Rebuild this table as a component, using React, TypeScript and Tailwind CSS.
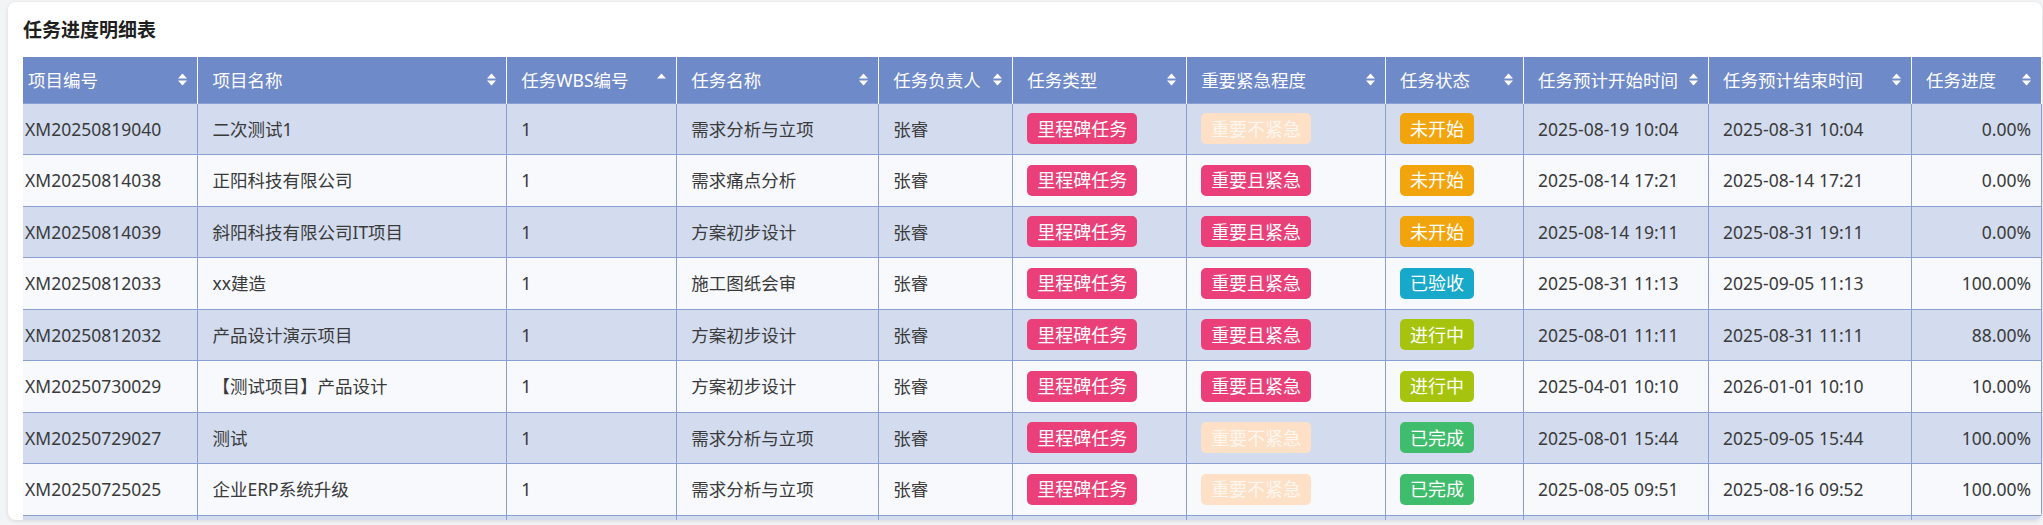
const columns = [
  { title: "项目编号", width: 175, sort: "both" },
  { title: "项目名称", width: 309, sort: "both" },
  { title: "任务WBS编号", width: 170, sort: "up" },
  { title: "任务名称", width: 202, sort: "both" },
  { title: "任务负责人", width: 134, sort: "both" },
  { title: "任务类型", width: 174, sort: "both" },
  { title: "重要紧急程度", width: 199, sort: "both" },
  { title: "任务状态", width: 138, sort: "both" },
  { title: "任务预计开始时间", width: 185, sort: "both" },
  { title: "任务预计结束时间", width: 203, sort: "both" },
  { title: "任务进度", width: 130, sort: "both" },
];

const priorityStyle: Record<string, string> = {
  重要不紧急: "bg-[#fde0c6] text-[#fff7ef]",
  重要且紧急: "bg-[#ea3f78] text-white",
};

const statusStyle: Record<string, string> = {
  未开始: "bg-[#f2a40c]",
  已验收: "bg-[#18a8c9]",
  进行中: "bg-[#a6c40e]",
  已完成: "bg-[#3fbd6c]",
};

const rows = [
  ["XM20250819040", "二次测试1", "需求分析与立项", "重要不紧急", "未开始", "2025-08-19 10:04", "2025-08-31 10:04", "0.00%"],
  ["XM20250814038", "正阳科技有限公司", "需求痛点分析", "重要且紧急", "未开始", "2025-08-14 17:21", "2025-08-14 17:21", "0.00%"],
  ["XM20250814039", "斜阳科技有限公司IT项目", "方案初步设计", "重要且紧急", "未开始", "2025-08-14 19:11", "2025-08-31 19:11", "0.00%"],
  ["XM20250812033", "xx建造", "施工图纸会审", "重要且紧急", "已验收", "2025-08-31 11:13", "2025-09-05 11:13", "100.00%"],
  ["XM20250812032", "产品设计演示项目", "方案初步设计", "重要且紧急", "进行中", "2025-08-01 11:11", "2025-08-31 11:11", "88.00%"],
  ["XM20250730029", "【测试项目】产品设计", "方案初步设计", "重要且紧急", "进行中", "2025-04-01 10:10", "2026-01-01 10:10", "10.00%"],
  ["XM20250729027", "测试", "需求分析与立项", "重要不紧急", "已完成", "2025-08-01 15:44", "2025-09-05 15:44", "100.00%"],
  ["XM20250725025", "企业ERP系统升级", "需求分析与立项", "重要不紧急", "已完成", "2025-08-05 09:51", "2025-08-16 09:52", "100.00%"],
];

function SortIcon({ mode }: { mode: string }) {
  return (
    <svg width="9" height="13" viewBox="0 0 9 13" className="shrink-0">
      <polygon points="0,5.5 4.5,0.5 9,5.5" fill="white" />
      {mode === "both" && <polygon points="0,7.5 9,7.5 4.5,12.5" fill="white" />}
    </svg>
  );
}

function Badge({ text, className }: { text: string; className: string }) {
  return (
    <span className={`inline-flex h-[31px] items-center rounded-[5px] px-[10px] text-[18px] leading-none ${className}`}>
      {text}
    </span>
  );
}

export default function App() {
  return (
    <div
      className="w-[2043px] h-[525px] overflow-hidden bg-[#f3f4f6] pl-[8px] pt-[2px]"
      style={{ fontFamily: '"Noto Sans", "Noto Sans CJK SC", sans-serif' }}
    >
      <div className="w-[2034px] h-[518px] overflow-hidden rounded-[8px] bg-white pl-[15px] pt-[16px] shadow-[0_1px_4px_rgba(0,0,0,0.12)]">
        <h2 className="mb-[15px] h-[24px] text-[19px] font-bold leading-[24px] text-[#1f1f1f]">任务进度明细表</h2>
        <table className="table-fixed border-collapse text-[17.5px] text-[#3a3a3a]">
          <colgroup>
            {columns.map((c) => (
              <col key={c.title} style={{ width: c.width }} />
            ))}
          </colgroup>
          <thead>
            <tr className="h-[46px] bg-[#6f8ac9] text-white">
              {columns.map((c, i) => (
                <th
                  key={c.title}
                  className={`border-x border-white p-0 text-left font-normal first:border-l-0 ${i === 0 ? "pl-[5px]" : "pl-[14px]"} pr-[10px]`}
                >
                  <div className="flex items-center justify-between gap-1 whitespace-nowrap">
                    <span>{c.title}</span>
                    <SortIcon mode={c.sort} />
                  </div>
                </th>
              ))}
            </tr>
          </thead>
          <tbody>
            {rows.map((r, idx) => (
              <tr key={r[0]} className={`h-[51.5px] ${idx % 2 === 0 ? "bg-[#d3dcef]" : "bg-[#f7f9fd]"}`}>
                <td className="border border-[#8c9fd2] border-l-0 pl-[2px] whitespace-nowrap">{r[0]}</td>
                <td className="border border-[#8c9fd2] pl-[14px] whitespace-nowrap">{r[1]}</td>
                <td className="border border-[#8c9fd2] pl-[14px]">1</td>
                <td className="border border-[#8c9fd2] pl-[14px] whitespace-nowrap">{r[2]}</td>
                <td className="border border-[#8c9fd2] pl-[14px]">张睿</td>
                <td className="border border-[#8c9fd2] pl-[14px]">
                  <Badge text="里程碑任务" className="bg-[#ea3f78] text-white" />
                </td>
                <td className="border border-[#8c9fd2] pl-[14px]">
                  <Badge text={r[3]} className={priorityStyle[r[3]]} />
                </td>
                <td className="border border-[#8c9fd2] pl-[14px]">
                  <Badge text={r[4]} className={`${statusStyle[r[4]]} text-white`} />
                </td>
                <td className="border border-[#8c9fd2] pl-[14px] whitespace-nowrap">{r[5]}</td>
                <td className="border border-[#8c9fd2] pl-[14px] whitespace-nowrap">{r[6]}</td>
                <td className="border border-[#8c9fd2] pr-[10px] text-right">{r[7]}</td>
              </tr>
            ))}
            <tr className="h-[51.5px] bg-[#d3dcef]">
              {columns.map((c) => (
                <td key={c.title} className="border border-[#8c9fd2] first:border-l-0" />
              ))}
            </tr>
          </tbody>
        </table>
      </div>
    </div>
  );
}
